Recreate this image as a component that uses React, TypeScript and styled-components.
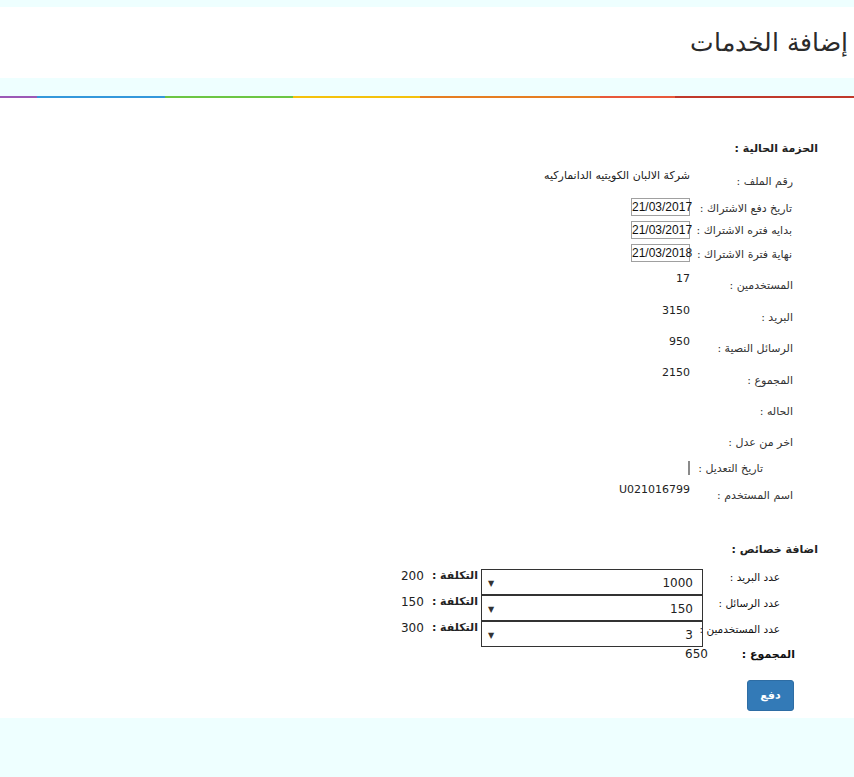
import * as React from "react";
import styled, { createGlobalStyle } from "styled-components";

const GlobalStyle = createGlobalStyle`
  html, body {
    margin: 0;
    padding: 0;
    background: #eeffff;
  }
  * {
    box-sizing: border-box;
  }
`;

const Page = styled.div`
  direction: rtl;
  min-height: 777px;
  padding-top: 7px;
  background: #eeffff;
  font-family: "Liberation Sans", "DejaVu Sans", sans-serif;
  font-size: 12px;
  color: #333;
`;

const Header = styled.header`
  height: 71px;
  background: #ffffff;
  display: flex;
  align-items: center;
  padding-right: 6px;
`;

const Title = styled.h1`
  margin: 0;
  font-family: "DejaVu Sans", sans-serif;
  font-weight: 200;
  font-size: 25px;
  color: #2a2a2a;
`;

const Rainbow = styled.div`
  margin-top: 18px;
  height: 2px;
  direction: ltr;
  background: linear-gradient(
    to right,
    #9b59b6 0 37px,
    #3498db 37px 165px,
    #6cc644 165px 293px,
    #f4c20d 293px 420px,
    #e67e22 420px 600px,
    #e8583a 600px 675px,
    #c0392b 675px 100%
  );
`;

const Content = styled.main`
  background: #ffffff;
  padding: 44px 36px 7px 0;
`;

const Heading = styled.div<{ $top?: number }>`
  margin-top: ${(p) => p.$top ?? 0}px;
  font-family: "DejaVu Sans", sans-serif;
  font-weight: bold;
  font-size: 11px;
  line-height: 14px;
  color: #222;
`;

const InfoList = styled.div`
  margin-top: 13px;
`;

const InfoRow = styled.div<{ $h: number }>`
  display: flex;
  align-items: flex-start;
  height: ${(p) => p.$h}px;
`;

const InfoLabel = styled.div<{ $drop: number; $indent?: number }>`
  width: 128px;
  flex: none;
  padding-right: ${(p) => p.$indent ?? 25}px;
  padding-top: ${(p) => p.$drop}px;
  line-height: 14px;
  font-family: "DejaVu Sans", sans-serif;
  font-size: 11px;
  color: #333;
  white-space: nowrap;
`;

const InfoValue = styled.div`
  line-height: 14px;
  color: #222;
  white-space: nowrap;
  font-family: "DejaVu Sans", sans-serif;
  font-size: 11px;
`;

const DateBox = styled.span`
  display: inline-block;
  width: 59px;
  height: 18px;
  border: 1px solid #a0a0a0;
  font-family: "Liberation Sans", sans-serif;
  font-size: 12px;
  line-height: 16px;
  text-align: center;
  color: #111;
  direction: ltr;
`;

const EmptyBar = styled.span`
  display: block;
  margin-top: 2px;
  width: 2px;
  height: 14px;
  background: #8a8a8a;
`;

const AddList = styled.div`
  margin-top: 12px;
`;

const AddRow = styled.div`
  display: flex;
  align-items: flex-start;
  height: 26px;
`;

const AddLabel = styled.div<{ $w?: number; $pad?: number; $bold?: boolean }>`
  width: ${(p) => p.$w ?? 115}px;
  flex: none;
  padding-right: ${(p) => p.$pad ?? 38}px;
  padding-top: 1px;
  line-height: 14px;
  font-family: "DejaVu Sans", sans-serif;
  font-weight: ${(p) => (p.$bold ? "bold" : "normal")};
  font-size: ${(p) => (p.$bold ? 11 : 10.5)}px;
  color: #111;
  white-space: nowrap;
`;

const SelectBox = styled.div`
  width: 222px;
  height: 26px;
  flex: none;
  border: 1px solid #333;
  display: flex;
  align-items: center;
  justify-content: space-between;
  padding: 2px 9px 0 6px;
  font-family: "DejaVu Sans", sans-serif;
  font-size: 12px;
  color: #222;
`;

const SelectValue = styled.span`
  direction: ltr;
`;

const Arrow = styled.span`
  font-size: 8px;
  color: #333;
`;

const CostLabel = styled.span`
  margin-right: 3px;
  line-height: 14px;
  font-family: "DejaVu Sans", sans-serif;
  font-weight: bold;
  font-size: 11px;
  color: #222;
  white-space: nowrap;
`;

const CostValue = styled.span`
  margin-right: 8px;
  line-height: 14px;
  font-family: "DejaVu Sans", sans-serif;
  font-size: 12px;
  color: #222;
`;

const TotalRow = styled.div`
  display: flex;
  align-items: flex-start;
  height: 16px;
`;

const TotalValue = styled.span`
  line-height: 14px;
  font-family: "DejaVu Sans", sans-serif;
  font-size: 12px;
  color: #222;
`;

const PayButton = styled.button`
  margin-top: 17px;
  margin-right: 24px;
  width: 47px;
  height: 31px;
  border: 1px solid #2e6da4;
  border-radius: 3px;
  background: #337ab7;
  color: #fff;
  font-family: "DejaVu Sans", sans-serif;
  font-weight: bold;
  font-size: 11px;
  cursor: pointer;
`;

interface AddItem {
  label: string;
  value: string;
  cost: string;
}

const addItems: AddItem[] = [
  { label: "عدد البريد :", value: "1000", cost: "200" },
  { label: "عدد الرسائل :", value: "150", cost: "150" },
  { label: "عدد المستخدمين :", value: "3", cost: "300" },
];

export default function App() {
  return (
    <>
      <GlobalStyle />
      <Page>
        <Header>
          <Title>إضافة الخدمات</Title>
        </Header>
        <Rainbow />
        <Content>
          <Heading>الحزمة الحالية :</Heading>
          <InfoList>
            <InfoRow $h={29}>
              <InfoLabel $drop={6}>رقم الملف :</InfoLabel>
              <InfoValue>شركة الالبان الكويتيه الدانماركيه</InfoValue>
            </InfoRow>
            <InfoRow $h={23}>
              <InfoLabel $drop={4} $indent={26}>تاريخ دفع الاشتراك :</InfoLabel>
              <DateBox>21/03/2017</DateBox>
            </InfoRow>
            <InfoRow $h={23}>
              <InfoLabel $drop={3} $indent={26}>بدايه فتره الاشتراك :</InfoLabel>
              <DateBox>21/03/2017</DateBox>
            </InfoRow>
            <InfoRow $h={28}>
              <InfoLabel $drop={4} $indent={26}>نهاية فترة الاشتراك :</InfoLabel>
              <DateBox>21/03/2018</DateBox>
            </InfoRow>
            <InfoRow $h={32}>
              <InfoLabel $drop={7}>المستخدمين :</InfoLabel>
              <InfoValue>17</InfoValue>
            </InfoRow>
            <InfoRow $h={31}>
              <InfoLabel $drop={7}>البريد :</InfoLabel>
              <InfoValue>3150</InfoValue>
            </InfoRow>
            <InfoRow $h={31}>
              <InfoLabel $drop={7}>الرسائل النصية :</InfoLabel>
              <InfoValue>950</InfoValue>
            </InfoRow>
            <InfoRow $h={31}>
              <InfoLabel $drop={8}>المجموع :</InfoLabel>
              <InfoValue>2150</InfoValue>
            </InfoRow>
            <InfoRow $h={31}>
              <InfoLabel $drop={8}>الحاله :</InfoLabel>
            </InfoRow>
            <InfoRow $h={31}>
              <InfoLabel $drop={8}>اخر من عدل :</InfoLabel>
            </InfoRow>
            <InfoRow $h={24}>
              <InfoLabel $drop={3} $indent={55}>تاريخ التعديل :</InfoLabel>
              <EmptyBar />
            </InfoRow>
            <InfoRow $h={25}>
              <InfoLabel $drop={6}>اسم المستخدم :</InfoLabel>
              <InfoValue>U021016799</InfoValue>
            </InfoRow>
          </InfoList>

          <Heading $top={35}>اضافة خصائص :</Heading>
          <AddList>
            {addItems.map((item) => (
              <AddRow key={item.label}>
                <AddLabel>{item.label}</AddLabel>
                <SelectBox>
                  <SelectValue>{item.value}</SelectValue>
                  <Arrow>▼</Arrow>
                </SelectBox>
                <CostLabel>التكلفة :</CostLabel>
                <CostValue>{item.cost}</CostValue>
              </AddRow>
            ))}
            <TotalRow>
              <AddLabel $w={110} $pad={23} $bold>
                المجموع :
              </AddLabel>
              <TotalValue>650</TotalValue>
            </TotalRow>
          </AddList>
          <PayButton type="button">دفع</PayButton>
        </Content>
      </Page>
    </>
  );
}
